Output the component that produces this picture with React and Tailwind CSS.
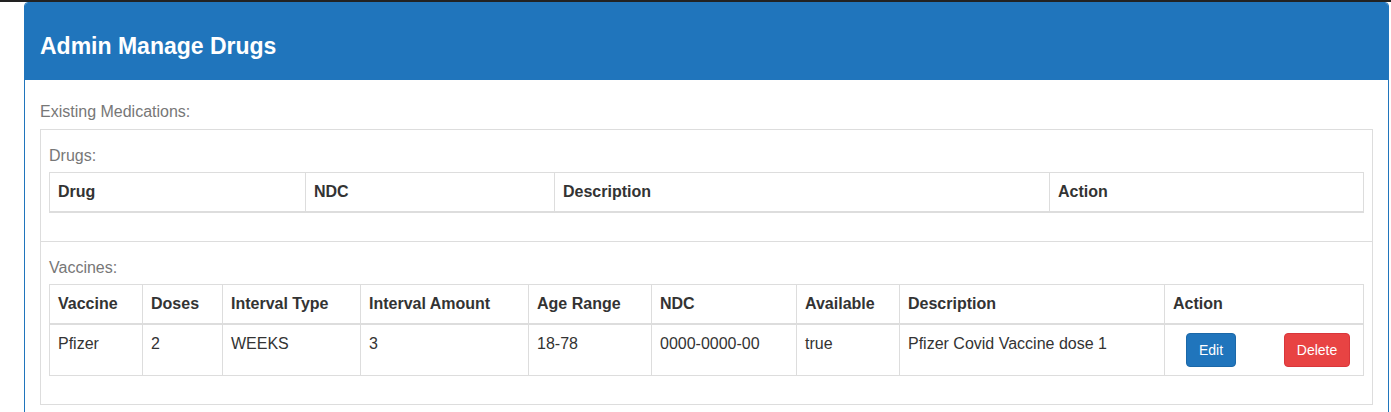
import React from 'react';

const drugCols = [
  { label: 'Drug', w: 'w-[256px]' },
  { label: 'NDC', w: 'w-[249px]' },
  { label: 'Description', w: 'w-[495px]' },
  { label: 'Action', w: '' },
];

const vaccineCols = [
  { label: 'Vaccine', w: 'w-[93px]' },
  { label: 'Doses', w: 'w-[80px]' },
  { label: 'Interval Type', w: 'w-[138px]' },
  { label: 'Interval Amount', w: 'w-[168px]' },
  { label: 'Age Range', w: 'w-[123px]' },
  { label: 'NDC', w: 'w-[145px]' },
  { label: 'Available', w: 'w-[103px]' },
  { label: 'Description', w: 'w-[265px]' },
  { label: 'Action', w: '' },
];

const vaccines = [
  {
    name: 'Pfizer',
    doses: 2,
    intervalType: 'WEEKS',
    intervalAmount: 3,
    ageRange: '18-78',
    ndc: '0000-0000-00',
    available: 'true',
    description: 'Pfizer Covid Vaccine dose 1',
  },
];

function HeadRow({ cols }) {
  return (
    <thead>
      <tr>
        {cols.map((c) => (
          <th
            key={c.label}
            className={`${c.w} border border-[#ddd] border-b-2 px-2 py-2 text-left font-bold leading-[22px] align-bottom`}
          >
            {c.label}
          </th>
        ))}
      </tr>
    </thead>
  );
}

function Cell({ children }) {
  return <td className="border border-[#ddd] px-2 py-2 leading-[22px] align-top">{children}</td>;
}

export default function App() {
  return (
    <div className="min-h-screen bg-white text-[16px] text-[#333]" style={{ fontFamily: '"Liberation Sans", Arial, sans-serif' }}>
      <div className="h-[2px] bg-[#222]" />

      <div className="ml-[24px] w-[1365px] border border-[#2075bc] rounded-t-[4px] overflow-hidden">
        {/* Heading */}
        <div className="bg-[#2075bc] px-[15px] pt-[30px] pb-[21px]">
          <h3 className="text-[23px] leading-[26px] font-bold text-white">Admin Manage Drugs</h3>
        </div>

        {/* Body */}
        <div className="px-[15px] pt-[21px] pb-[10px]">
          <p className="leading-[22px] text-[#777] mb-[6px]">Existing Medications:</p>

          <div className="border border-[#ddd]">
            <div className="px-2 pt-[15px] pb-[28px]">
              <p className="leading-[22px] text-[#777] mb-[5px]">Drugs:</p>
              <table className="w-full table-fixed border-collapse">
                <HeadRow cols={drugCols} />
              </table>
            </div>

            <div className="border-t border-[#ddd] px-2 pt-[15px] pb-[28px]">
              <p className="leading-[22px] text-[#777] mb-[5px]">Vaccines:</p>
              <table className="w-full table-fixed border-collapse">
                <HeadRow cols={vaccineCols} />
                <tbody>
                  {vaccines.map((v) => (
                    <tr key={v.name}>
                      <Cell>{v.name}</Cell>
                      <Cell>{v.doses}</Cell>
                      <Cell>{v.intervalType}</Cell>
                      <Cell>{v.intervalAmount}</Cell>
                      <Cell>{v.ageRange}</Cell>
                      <Cell>{v.ndc}</Cell>
                      <Cell>{v.available}</Cell>
                      <Cell>{v.description}</Cell>
                      <td className="border border-[#ddd] px-2 py-2 align-top">
                        <div className="flex items-center">
                          <button className="ml-[13px] h-[34px] w-[50px] rounded-[4px] border border-[#1b68a8] bg-[#2075bc] text-[14px] text-white">
                            Edit
                          </button>
                          <button className="ml-[48px] h-[34px] w-[66px] rounded-[4px] border border-[#d9363b] bg-[#e84343] text-[14px] text-white">
                            Delete
                          </button>
                        </div>
                      </td>
                    </tr>
                  ))}
                </tbody>
              </table>
            </div>
          </div>
        </div>
      </div>
    </div>
  );
}
